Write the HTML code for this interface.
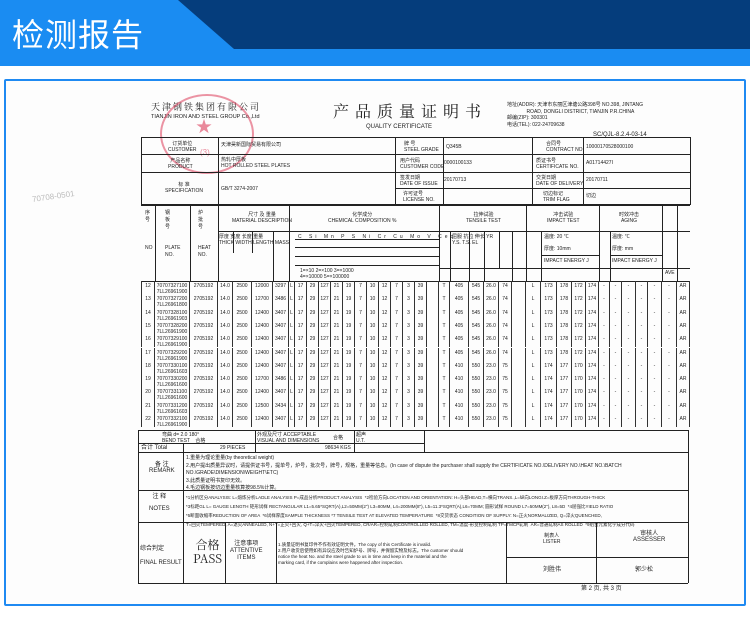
<!DOCTYPE html>
<html><head><meta charset="utf-8">
<style>
*{margin:0;padding:0;box-sizing:border-box}
body{width:750px;height:624px;background:#fff;position:relative;overflow:hidden;font-family:"Liberation Sans","Noto Sans CJK SC",sans-serif;color:#222}
.a{position:absolute}
.bar{left:0;top:0;width:750px;height:66px;background:#1a8cf2}
.navy{left:0;top:0;width:750px;height:49px;background:#053d7c;clip-path:polygon(178px 0,750px 0,750px 49px,234px 49px)}
.ttl{left:12px;top:10px;color:#fff;font-size:32px;letter-spacing:1px;font-family:"Noto Sans CJK SC",sans-serif}
.frame{left:4px;top:79px;width:742px;height:527px;border:2px solid #1f8af2;border-radius:2px;background:#fdfdfd}
.h{position:absolute;height:1px;background:#222}
.v{position:absolute;width:1px;background:#222}
.t{position:absolute;font-size:5px;line-height:6px;white-space:nowrap;color:#222}
.r{position:absolute;left:141px;width:549px;height:13.3px;display:flex;font-size:5px;line-height:6px}
.r span{border-right:1px solid #333;text-align:center;padding-top:2px;overflow:hidden;white-space:nowrap}
.r span:first-child{border-left:1px solid #333}
</style></head><body>
<div class="a bar"></div><div class="a navy"></div>
<div class="a ttl">检测报告</div>
<div class="a frame"></div>

<!-- header texts -->
<div class="t" style="left:151px;top:102px;font-size:9px;line-height:10px;letter-spacing:2px;font-family:'Noto Serif CJK SC',serif">天津钢铁集团有限公司</div>
<div class="t" style="left:151px;top:114px;font-size:5.5px">TIANJIN IRON AND STEEL GROUP Co.,Ltd</div>
<div class="t" style="left:333px;top:102px;font-size:16px;line-height:18px;letter-spacing:6px;font-family:'Noto Serif CJK SC',serif">产品质量证明书</div>
<div class="t" style="left:366px;top:124px;font-size:6px">QUALITY CERTIFICATE</div>
<div class="t" style="left:507px;top:102px;line-height:6.5px">地址(ADDR): 天津市东丽区津塘公路398号 NO.398, JINTANG<br>&nbsp;&nbsp;&nbsp;&nbsp;&nbsp;&nbsp;&nbsp;&nbsp;&nbsp;&nbsp;&nbsp;&nbsp;&nbsp;&nbsp;ROAD, DONGLI DISTRICT, TIANJIN P.R.CHINA<br>邮编(ZIP): 300301<br>电话(TEL): 022-24709638</div>
<div class="t" style="left:593px;top:132px;font-size:6px">SC/QJL-8.2.4-03-14</div>
<div class="a" style="left:160px;top:94px;width:94px;height:80px;border:2px solid rgba(220,60,90,.55);border-radius:50%"></div>
<div class="t" style="left:196px;top:120px;font-size:16px;line-height:16px;color:rgba(220,60,90,.6)">★</div>
<div class="t" style="left:200px;top:150px;font-size:8px;color:rgba(220,60,90,.6)">(3)</div>
<div class="t" style="left:32px;top:194px;font-size:8px;color:#bbb;transform:rotate(-8deg)">70708-0501</div>

<!-- top info table -->
<div class="h" style="left:141px;top:137px;width:550px"></div>
<div class="h" style="left:141px;top:154px;width:550px"></div>
<div class="h" style="left:141px;top:172px;width:550px"></div>
<div class="h" style="left:395px;top:188px;width:296px"></div>
<div class="h" style="left:141px;top:204px;width:550px"></div>
<div class="v" style="left:141px;top:137px;height:67px"></div>
<div class="v" style="left:218px;top:137px;height:67px"></div>
<div class="v" style="left:395px;top:137px;height:67px"></div>
<div class="v" style="left:443px;top:137px;height:67px"></div>
<div class="v" style="left:532px;top:137px;height:67px"></div>
<div class="v" style="left:583px;top:137px;height:67px"></div>
<div class="v" style="left:690px;top:137px;height:67px"></div>
<div class="t" style="left:168px;top:141px;text-align:center">订货单位<br>CUSTOMER</div>
<div class="t" style="left:168px;top:158px;text-align:center">产品名称<br>PRODUCT</div>
<div class="t" style="left:165px;top:182px;text-align:center">标 准<br>SPECIFICATION</div>
<div class="t" style="left:221px;top:142px">天津昊新国际贸易有限公司</div>
<div class="t" style="left:221px;top:157px">热轧中厚板<br>HOT ROLLED STEEL PLATES</div>
<div class="t" style="left:221px;top:186px">GB/T 3274-2007</div>
<div class="t" style="left:404px;top:141px">牌 号<br>STEEL GRADE</div>
<div class="t" style="left:400px;top:158px">用户代码<br>CUSTOMER CODE</div>
<div class="t" style="left:400px;top:175px">签发日期<br>DATE OF ISSUE</div>
<div class="t" style="left:403px;top:191px">许可证号<br>LICENSE NO.</div>
<div class="t" style="left:446px;top:144px">Q345B</div>
<div class="t" style="left:444px;top:160px">0000100133</div>
<div class="t" style="left:444px;top:177px">20170713</div>
<div class="t" style="left:546px;top:141px">合同号<br>CONTRACT NO.</div>
<div class="t" style="left:536px;top:158px">质证书号<br>CERTIFICATE NO.</div>
<div class="t" style="left:536px;top:175px">交货日期<br>DATE OF DELIVERY</div>
<div class="t" style="left:543px;top:191px">切边标记<br>TRIM FLAG</div>
<div class="t" style="left:586px;top:144px">10000170528000100</div>
<div class="t" style="left:586px;top:160px">A01714427I</div>
<div class="t" style="left:586px;top:177px">20170711</div>
<div class="t" style="left:586px;top:193px">切边</div>

<!-- main table header -->
<div class="h" style="left:141px;top:205px;width:549px"></div>
<div class="h" style="left:141px;top:281px;width:549px"></div>
<div class="h" style="left:218px;top:231px;width:472px"></div>
<div class="h" style="left:295px;top:239px;width:144px"></div>
<div class="h" style="left:295px;top:247px;width:144px"></div>
<div class="h" style="left:295px;top:256px;width:144px"></div>
<div class="h" style="left:295px;top:265px;width:144px"></div>
<div class="h" style="left:439px;top:268px;width:251px"></div>
<div class="h" style="left:541px;top:255px;width:58px"></div>
<div class="h" style="left:610px;top:255px;width:52px"></div>
<div class="v" style="left:155px;top:205px;height:76px"></div>
<div class="v" style="left:190px;top:205px;height:76px"></div>
<div class="v" style="left:218px;top:205px;height:76px"></div>
<div class="v" style="left:289px;top:205px;height:76px"></div>
<div class="v" style="left:439px;top:205px;height:76px"></div>
<div class="v" style="left:526px;top:205px;height:76px"></div>
<div class="v" style="left:599px;top:205px;height:76px"></div>
<div class="v" style="left:662px;top:205px;height:76px"></div>
<div class="v" style="left:677px;top:205px;height:76px"></div>
<div class="v" style="left:233px;top:231px;height:22px"></div>
<div class="v" style="left:252px;top:231px;height:22px"></div>
<div class="v" style="left:273px;top:231px;height:50px"></div>
<div class="v" style="left:450px;top:231px;height:50px"></div>
<div class="v" style="left:469px;top:231px;height:50px"></div>
<div class="v" style="left:484px;top:231px;height:50px"></div>
<div class="v" style="left:499px;top:231px;height:37px"></div>
<div class="v" style="left:512px;top:231px;height:50px"></div>
<div class="v" style="left:541px;top:231px;height:50px"></div>
<div class="v" style="left:610px;top:231px;height:50px"></div>
<div class="t" style="left:145px;top:210px;line-height:7px">序<br>号<br><br><br><br>NO</div>
<div class="t" style="left:165px;top:210px;line-height:7px">钢<br>板<br>号<br><br><br>PLATE<br>NO.</div>
<div class="t" style="left:198px;top:210px;line-height:7px">炉<br>批<br>号<br><br><br>HEAT<br>NO.</div>
<div class="t" style="left:232px;top:212px;text-align:center">尺寸 及 重量<br>MATERIAL DESCRIPTION</div>
<div class="t" style="left:328px;top:212px;text-align:center">化学成分<br>CHEMICAL COMPOSITION %</div>
<div class="t" style="left:466px;top:212px;text-align:center">拉伸试验<br>TENSILE TEST</div>
<div class="t" style="left:547px;top:212px;text-align:center">冲击试验<br>IMPACT TEST</div>
<div class="t" style="left:619px;top:212px;text-align:center">时效冲击<br>AGING</div>
<div class="t" style="left:219px;top:234px">厚度 宽度 长度 重量<br>THICK WIDTH LENGTH MASS</div>
<div class="t" style="left:298px;top:234px;letter-spacing:3px">C Si Mn P S Ni Cr Cu Mo V Ceq</div>
<div class="t" style="left:300px;top:268px">1=×10 2=×100 3=×1000<br>4=×10000 5=×100000</div>
<div class="t" style="left:452px;top:234px">屈服 抗拉 伸长 YR<br>Y.S. T.S. EL</div>
<div class="t" style="left:544px;top:234px">温度: 20 ℃<br><br>厚度: 10mm<br><br>IMPACT ENERGY J</div>
<div class="t" style="left:612px;top:234px">温度: ℃<br><br>厚度: mm<br><br>IMPACT ENERGY J</div>
<div class="t" style="left:665px;top:270px">AVE</div>

<!-- data rows -->
<div class="r" style="top:281px"><span style="width:14px">12</span><span style="width:35px">70707327100<br>7LL26961900</span><span style="width:28px">2705192</span><span style="width:15px">14.0</span><span style="width:19px">2500</span><span style="width:21px">12000</span><span style="width:16px">3297</span><span style="width:6px">L</span><span style="width:12px">17</span><span style="width:12px">29</span><span style="width:12px">127</span><span style="width:12px">21</span><span style="width:12px">19</span><span style="width:12px">7</span><span style="width:12px">10</span><span style="width:12px">12</span><span style="width:12px">7</span><span style="width:12px">3</span><span style="width:12px">39</span><span style="width:12px"></span><span style="width:11px">T</span><span style="width:19px">405</span><span style="width:15px">545</span><span style="width:15px">26.0</span><span style="width:13px">74</span><span style="width:14px"></span><span style="width:15px">L</span><span style="width:16px">173</span><span style="width:15px">178</span><span style="width:14px">172</span><span style="width:13px">174</span><span style="width:11px">-</span><span style="width:12px">-</span><span style="width:14px">-</span><span style="width:12px">-</span><span style="width:14px">-</span><span style="width:15px">-</span><span style="width:13px">AR</span></div>
<div class="r" style="top:294.3px"><span style="width:14px">13</span><span style="width:35px">70707327200<br>7LL26961800</span><span style="width:28px">2705192</span><span style="width:15px">14.0</span><span style="width:19px">2500</span><span style="width:21px">12700</span><span style="width:16px">3486</span><span style="width:6px">L</span><span style="width:12px">17</span><span style="width:12px">29</span><span style="width:12px">127</span><span style="width:12px">21</span><span style="width:12px">19</span><span style="width:12px">7</span><span style="width:12px">10</span><span style="width:12px">12</span><span style="width:12px">7</span><span style="width:12px">3</span><span style="width:12px">39</span><span style="width:12px"></span><span style="width:11px">T</span><span style="width:19px">405</span><span style="width:15px">545</span><span style="width:15px">26.0</span><span style="width:13px">74</span><span style="width:14px"></span><span style="width:15px">L</span><span style="width:16px">173</span><span style="width:15px">178</span><span style="width:14px">172</span><span style="width:13px">174</span><span style="width:11px">-</span><span style="width:12px">-</span><span style="width:14px">-</span><span style="width:12px">-</span><span style="width:14px">-</span><span style="width:15px">-</span><span style="width:13px">AR</span></div>
<div class="r" style="top:307.6px"><span style="width:14px">14</span><span style="width:35px">70707328100<br>7LL26961903</span><span style="width:28px">2705192</span><span style="width:15px">14.0</span><span style="width:19px">2500</span><span style="width:21px">12400</span><span style="width:16px">3407</span><span style="width:6px">L</span><span style="width:12px">17</span><span style="width:12px">29</span><span style="width:12px">127</span><span style="width:12px">21</span><span style="width:12px">19</span><span style="width:12px">7</span><span style="width:12px">10</span><span style="width:12px">12</span><span style="width:12px">7</span><span style="width:12px">3</span><span style="width:12px">39</span><span style="width:12px"></span><span style="width:11px">T</span><span style="width:19px">405</span><span style="width:15px">545</span><span style="width:15px">26.0</span><span style="width:13px">74</span><span style="width:14px"></span><span style="width:15px">L</span><span style="width:16px">173</span><span style="width:15px">178</span><span style="width:14px">172</span><span style="width:13px">174</span><span style="width:11px">-</span><span style="width:12px">-</span><span style="width:14px">-</span><span style="width:12px">-</span><span style="width:14px">-</span><span style="width:15px">-</span><span style="width:13px">AR</span></div>
<div class="r" style="top:320.9px"><span style="width:14px">15</span><span style="width:35px">70707328200<br>7LL26961900</span><span style="width:28px">2705192</span><span style="width:15px">14.0</span><span style="width:19px">2500</span><span style="width:21px">12400</span><span style="width:16px">3407</span><span style="width:6px">L</span><span style="width:12px">17</span><span style="width:12px">29</span><span style="width:12px">127</span><span style="width:12px">21</span><span style="width:12px">19</span><span style="width:12px">7</span><span style="width:12px">10</span><span style="width:12px">12</span><span style="width:12px">7</span><span style="width:12px">3</span><span style="width:12px">39</span><span style="width:12px"></span><span style="width:11px">T</span><span style="width:19px">405</span><span style="width:15px">545</span><span style="width:15px">26.0</span><span style="width:13px">74</span><span style="width:14px"></span><span style="width:15px">L</span><span style="width:16px">173</span><span style="width:15px">178</span><span style="width:14px">172</span><span style="width:13px">174</span><span style="width:11px">-</span><span style="width:12px">-</span><span style="width:14px">-</span><span style="width:12px">-</span><span style="width:14px">-</span><span style="width:15px">-</span><span style="width:13px">AR</span></div>
<div class="r" style="top:334.2px"><span style="width:14px">16</span><span style="width:35px">70707329100<br>7LL26961900</span><span style="width:28px">2705192</span><span style="width:15px">14.0</span><span style="width:19px">2500</span><span style="width:21px">12400</span><span style="width:16px">3407</span><span style="width:6px">L</span><span style="width:12px">17</span><span style="width:12px">29</span><span style="width:12px">127</span><span style="width:12px">21</span><span style="width:12px">19</span><span style="width:12px">7</span><span style="width:12px">10</span><span style="width:12px">12</span><span style="width:12px">7</span><span style="width:12px">3</span><span style="width:12px">39</span><span style="width:12px"></span><span style="width:11px">T</span><span style="width:19px">405</span><span style="width:15px">545</span><span style="width:15px">26.0</span><span style="width:13px">74</span><span style="width:14px"></span><span style="width:15px">L</span><span style="width:16px">173</span><span style="width:15px">178</span><span style="width:14px">172</span><span style="width:13px">174</span><span style="width:11px">-</span><span style="width:12px">-</span><span style="width:14px">-</span><span style="width:12px">-</span><span style="width:14px">-</span><span style="width:15px">-</span><span style="width:13px">AR</span></div>
<div class="r" style="top:347.5px"><span style="width:14px">17</span><span style="width:35px">70707329200<br>7LL26961900</span><span style="width:28px">2705192</span><span style="width:15px">14.0</span><span style="width:19px">2500</span><span style="width:21px">12400</span><span style="width:16px">3407</span><span style="width:6px">L</span><span style="width:12px">17</span><span style="width:12px">29</span><span style="width:12px">127</span><span style="width:12px">21</span><span style="width:12px">19</span><span style="width:12px">7</span><span style="width:12px">10</span><span style="width:12px">12</span><span style="width:12px">7</span><span style="width:12px">3</span><span style="width:12px">39</span><span style="width:12px"></span><span style="width:11px">T</span><span style="width:19px">405</span><span style="width:15px">545</span><span style="width:15px">26.0</span><span style="width:13px">74</span><span style="width:14px"></span><span style="width:15px">L</span><span style="width:16px">173</span><span style="width:15px">178</span><span style="width:14px">172</span><span style="width:13px">174</span><span style="width:11px">-</span><span style="width:12px">-</span><span style="width:14px">-</span><span style="width:12px">-</span><span style="width:14px">-</span><span style="width:15px">-</span><span style="width:13px">AR</span></div>
<div class="r" style="top:360.8px"><span style="width:14px">18</span><span style="width:35px">70707330100<br>7LL26961603</span><span style="width:28px">2705192</span><span style="width:15px">14.0</span><span style="width:19px">2500</span><span style="width:21px">12400</span><span style="width:16px">3407</span><span style="width:6px">L</span><span style="width:12px">17</span><span style="width:12px">29</span><span style="width:12px">127</span><span style="width:12px">21</span><span style="width:12px">19</span><span style="width:12px">7</span><span style="width:12px">10</span><span style="width:12px">12</span><span style="width:12px">7</span><span style="width:12px">3</span><span style="width:12px">39</span><span style="width:12px"></span><span style="width:11px">T</span><span style="width:19px">410</span><span style="width:15px">550</span><span style="width:15px">23.0</span><span style="width:13px">75</span><span style="width:14px"></span><span style="width:15px">L</span><span style="width:16px">174</span><span style="width:15px">177</span><span style="width:14px">170</span><span style="width:13px">174</span><span style="width:11px">-</span><span style="width:12px">-</span><span style="width:14px">-</span><span style="width:12px">-</span><span style="width:14px">-</span><span style="width:15px">-</span><span style="width:13px">AR</span></div>
<div class="r" style="top:374.1px"><span style="width:14px">19</span><span style="width:35px">70707330200<br>7LL26961600</span><span style="width:28px">2705192</span><span style="width:15px">14.0</span><span style="width:19px">2500</span><span style="width:21px">12700</span><span style="width:16px">3486</span><span style="width:6px">L</span><span style="width:12px">17</span><span style="width:12px">29</span><span style="width:12px">127</span><span style="width:12px">21</span><span style="width:12px">19</span><span style="width:12px">7</span><span style="width:12px">10</span><span style="width:12px">12</span><span style="width:12px">7</span><span style="width:12px">3</span><span style="width:12px">39</span><span style="width:12px"></span><span style="width:11px">T</span><span style="width:19px">410</span><span style="width:15px">550</span><span style="width:15px">23.0</span><span style="width:13px">75</span><span style="width:14px"></span><span style="width:15px">L</span><span style="width:16px">174</span><span style="width:15px">177</span><span style="width:14px">170</span><span style="width:13px">174</span><span style="width:11px">-</span><span style="width:12px">-</span><span style="width:14px">-</span><span style="width:12px">-</span><span style="width:14px">-</span><span style="width:15px">-</span><span style="width:13px">AR</span></div>
<div class="r" style="top:387.4px"><span style="width:14px">20</span><span style="width:35px">70707331100<br>7LL26961600</span><span style="width:28px">2705192</span><span style="width:15px">14.0</span><span style="width:19px">2500</span><span style="width:21px">12400</span><span style="width:16px">3407</span><span style="width:6px">L</span><span style="width:12px">17</span><span style="width:12px">29</span><span style="width:12px">127</span><span style="width:12px">21</span><span style="width:12px">19</span><span style="width:12px">7</span><span style="width:12px">10</span><span style="width:12px">12</span><span style="width:12px">7</span><span style="width:12px">3</span><span style="width:12px">39</span><span style="width:12px"></span><span style="width:11px">T</span><span style="width:19px">410</span><span style="width:15px">550</span><span style="width:15px">23.0</span><span style="width:13px">75</span><span style="width:14px"></span><span style="width:15px">L</span><span style="width:16px">174</span><span style="width:15px">177</span><span style="width:14px">170</span><span style="width:13px">174</span><span style="width:11px">-</span><span style="width:12px">-</span><span style="width:14px">-</span><span style="width:12px">-</span><span style="width:14px">-</span><span style="width:15px">-</span><span style="width:13px">AR</span></div>
<div class="r" style="top:400.7px"><span style="width:14px">21</span><span style="width:35px">70707331200<br>7LL26961603</span><span style="width:28px">2705192</span><span style="width:15px">14.0</span><span style="width:19px">2500</span><span style="width:21px">12500</span><span style="width:16px">3434</span><span style="width:6px">L</span><span style="width:12px">17</span><span style="width:12px">29</span><span style="width:12px">127</span><span style="width:12px">21</span><span style="width:12px">19</span><span style="width:12px">7</span><span style="width:12px">10</span><span style="width:12px">12</span><span style="width:12px">7</span><span style="width:12px">3</span><span style="width:12px">39</span><span style="width:12px"></span><span style="width:11px">T</span><span style="width:19px">410</span><span style="width:15px">550</span><span style="width:15px">23.0</span><span style="width:13px">75</span><span style="width:14px"></span><span style="width:15px">L</span><span style="width:16px">174</span><span style="width:15px">177</span><span style="width:14px">170</span><span style="width:13px">174</span><span style="width:11px">-</span><span style="width:12px">-</span><span style="width:14px">-</span><span style="width:12px">-</span><span style="width:14px">-</span><span style="width:15px">-</span><span style="width:13px">AR</span></div>
<div class="r" style="top:414px"><span style="width:14px">22</span><span style="width:35px">70707332100<br>7LL26961900</span><span style="width:28px">2705192</span><span style="width:15px">14.0</span><span style="width:19px">2500</span><span style="width:21px">12400</span><span style="width:16px">3407</span><span style="width:6px">L</span><span style="width:12px">17</span><span style="width:12px">29</span><span style="width:12px">127</span><span style="width:12px">21</span><span style="width:12px">19</span><span style="width:12px">7</span><span style="width:12px">10</span><span style="width:12px">12</span><span style="width:12px">7</span><span style="width:12px">3</span><span style="width:12px">39</span><span style="width:12px"></span><span style="width:11px">T</span><span style="width:19px">410</span><span style="width:15px">550</span><span style="width:15px">23.0</span><span style="width:13px">75</span><span style="width:14px"></span><span style="width:15px">L</span><span style="width:16px">174</span><span style="width:15px">177</span><span style="width:14px">170</span><span style="width:13px">174</span><span style="width:11px">-</span><span style="width:12px">-</span><span style="width:14px">-</span><span style="width:12px">-</span><span style="width:14px">-</span><span style="width:15px">-</span><span style="width:13px">AR</span></div>

<!-- bottom sections -->
<div class="h" style="left:138px;top:430px;width:551px"></div>
<div class="h" style="left:138px;top:443px;width:286px"></div>
<div class="h" style="left:138px;top:452px;width:551px"></div>
<div class="h" style="left:138px;top:490px;width:551px"></div>
<div class="h" style="left:138px;top:522px;width:551px"></div>
<div class="h" style="left:506px;top:557px;width:182px"></div>
<div class="h" style="left:138px;top:583px;width:550px"></div>
<div class="v" style="left:138px;top:430px;height:153px"></div>
<div class="v" style="left:688px;top:430px;height:153px"></div>
<div class="v" style="left:183px;top:443px;height:140px"></div>
<div class="v" style="left:255px;top:430px;height:22px"></div>
<div class="v" style="left:354px;top:430px;height:22px"></div>
<div class="v" style="left:424px;top:430px;height:22px"></div>
<div class="v" style="left:225px;top:522px;height:61px"></div>
<div class="v" style="left:276px;top:522px;height:61px"></div>
<div class="v" style="left:506px;top:522px;height:61px"></div>
<div class="v" style="left:596px;top:522px;height:61px"></div>
<div class="t" style="left:162px;top:432px">弯曲 d= 2.0 180°<br>BEND TEST &nbsp;&nbsp;&nbsp;合格</div>
<div class="t" style="left:257px;top:432px">外观及尺寸 ACCEPTABLE<br>VISUAL AND DIMENSIONS</div>
<div class="t" style="left:333px;top:435px">合格</div>
<div class="t" style="left:356px;top:432px">超声<br>U.T.</div>
<div class="t" style="left:141px;top:445px;font-size:6px">合计 Total</div>
<div class="t" style="left:220px;top:445px">29 PIECES</div>
<div class="t" style="left:325px;top:445px">98634 KGS</div>
<div class="t" style="left:149px;top:462px;font-size:6px;text-align:center">备 注<br>REMARK</div>
<div class="t" style="left:186px;top:455px;line-height:7.5px">1.重量为理论重量(by theoretical weight)<br>2.用户提出质量异议时，请提供证书号，提单号，炉号，批次号，牌号，规格，重量等信息。(In case of dispute the purchaser shall supply the CERTIFICATE NO.\DELIVERY NO.\HEAT NO.\BATCH<br>NO.\GRADE\DIMENSION\WEIGHT\ETC)<br>3.此质量证明书复印无效。<br>4.毛边钢板按切边重量核算按98.5%计算。</div>
<div class="t" style="left:149px;top:494px;font-size:6px;text-align:center">注 释<br><br>NOTES</div>
<div class="t" style="left:186px;top:493px;line-height:9px;font-size:4.5px">*1分析区分ANALYSIS: L=熔炼分析LADLE ANALYSIS P=成品分析PRODUCT ANALYSIS &nbsp;*2检验方向LOCATION AND ORIENTATION: H=头部HEAD,T=横向TRANS.,L=纵向LONGI.Z=板厚方向THROUGH-THICK<br>*3标距GL L= GAUGE LENGTH 矩形试样 RECTANGULAR L1=5.65*SQRT(A),L2=50MM(2") L3=80MM, L4=200MM(8"), L5=11.3*SQRT(A),L6=70MM; 圆形试样 ROUND L7=50MM(2"), L8=5D &nbsp;*4屈强比YIELD RATIO<br>*5断面收缩率REDUCTION OF AREA &nbsp;*6试样厚度SAMPLE THICKNESS *7 TENSILE TEST AT ELEVATED TEMPERATURE &nbsp;*8交货状态 CONDITION OF SUPPLY: N=正火NORMALIZED, Q=淬火QUENCHED,<br>T=回火TEMPERED, A=退火ANNEALED, N+T=正火+回火, Q+T=淬火+回火TEMPERED, CR/AR=控制轧制CONTROLLED ROLLED, TM=温度-形变控制轧制 TP=TMCP轧制 &nbsp;AR=普通轧制AS ROLLED &nbsp;*9组合元素化学成分代码</div>
<div class="t" style="left:140px;top:542px;font-size:6px;line-height:14px">综合判定<br>FINAL RESULT</div>
<div class="t" style="left:193px;top:538px;font-size:12px;line-height:14px;text-align:center;font-family:'Noto Serif CJK SC',serif">合格<br>PASS</div>
<div class="t" style="left:230px;top:541px;font-size:6px;line-height:7px;text-align:center">注意事项<br>ATTENTIVE<br>ITEMS</div>
<div class="t" style="left:278px;top:542px;font-size:4.5px;line-height:6px">1.质量证明书复印件不作有效证明文件。The copy of this Certificate is invalid.<br>2.用户收货后使用如有异议应及时告知炉号、牌号，并保留实物及标志。The customer should<br>notice the heat No. and the steel grade to us in time and keep in the material and the<br>marking card, if the complains were happened after inspection.</div>
<div class="t" style="left:543px;top:533px;text-align:center">制表人<br>LISTER</div>
<div class="t" style="left:633px;top:531px;font-size:6px;text-align:center">审核人<br>ASSESSER</div>
<div class="t" style="left:543px;top:567px;font-size:6px">刘胜伟</div>
<div class="t" style="left:635px;top:567px;font-size:6px">郭少松</div>
<div class="t" style="left:581px;top:586px;font-size:6px">第 2 页, 共 3 页</div>
</body></html>
